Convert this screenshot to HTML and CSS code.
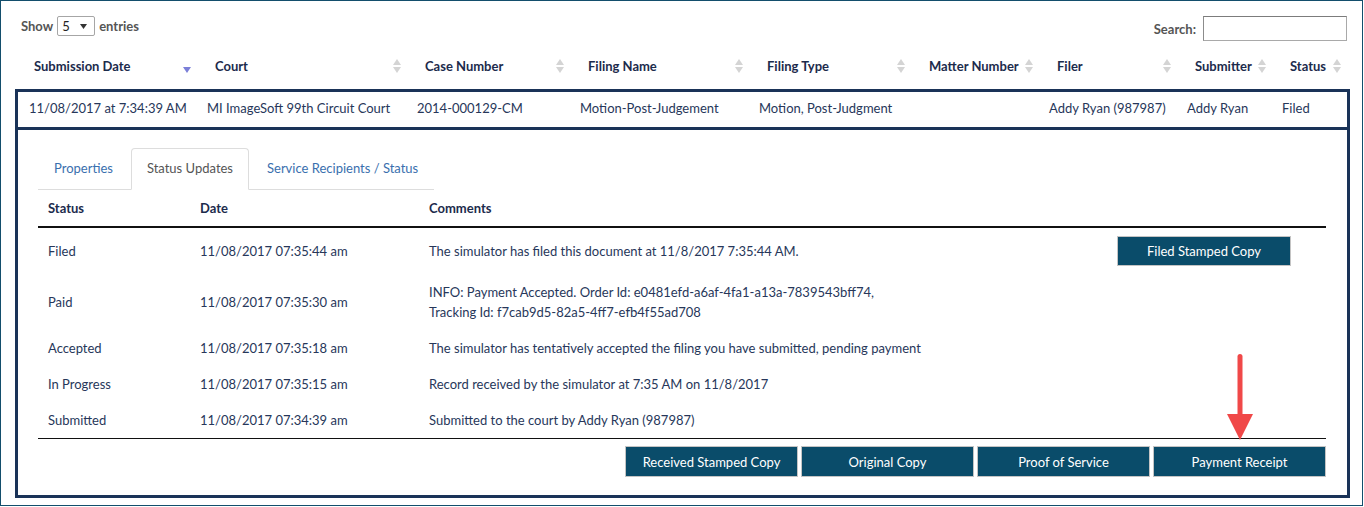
FILE: index.html
```html
<!DOCTYPE html>
<html lang="en">

<head>
    <meta charset="UTF-8">
    <title>Filings</title>
    <link rel="stylesheet" href="styles.css">
</head>

<body>
    <div class="frame">

        <div class="toolbar">
            <div class="length">
                Show
                <span class="select">5
                    <svg class="caret" width="7" height="5" viewBox="0 0 7 5"><polygon points="0,0 7,0 3.5,5" fill="#333" /></svg>
                </span>
                entries
            </div>
            <div class="search">
                Search:
                <input type="text">
            </div>
        </div>

        <div class="thead cols-head">
            <div class="th">Submission Date <svg class="sort desc" width="8" height="14" viewBox="0 0 8 14"><polygon points="0,8 8,8 4,14" /></svg></div>
            <div class="th">Court <svg class="sort" width="8" height="14" viewBox="0 0 8 14"><polygon points="4,0 8,6 0,6" /><polygon points="0,8 8,8 4,14" /></svg></div>
            <div class="th">Case Number <svg class="sort" width="8" height="14" viewBox="0 0 8 14"><polygon points="4,0 8,6 0,6" /><polygon points="0,8 8,8 4,14" /></svg></div>
            <div class="th">Filing Name <svg class="sort" width="8" height="14" viewBox="0 0 8 14"><polygon points="4,0 8,6 0,6" /><polygon points="0,8 8,8 4,14" /></svg></div>
            <div class="th">Filing Type <svg class="sort" width="8" height="14" viewBox="0 0 8 14"><polygon points="4,0 8,6 0,6" /><polygon points="0,8 8,8 4,14" /></svg></div>
            <div class="th">Matter Number <svg class="sort" width="8" height="14" viewBox="0 0 8 14"><polygon points="4,0 8,6 0,6" /><polygon points="0,8 8,8 4,14" /></svg></div>
            <div class="th">Filer <svg class="sort" width="8" height="14" viewBox="0 0 8 14"><polygon points="4,0 8,6 0,6" /><polygon points="0,8 8,8 4,14" /></svg></div>
            <div class="th">Submitter <svg class="sort" width="8" height="14" viewBox="0 0 8 14"><polygon points="4,0 8,6 0,6" /><polygon points="0,8 8,8 4,14" /></svg></div>
            <div class="th">Status <svg class="sort" width="8" height="14" viewBox="0 0 8 14"><polygon points="4,0 8,6 0,6" /><polygon points="0,8 8,8 4,14" /></svg></div>
        </div>

        <div class="record">
            <div class="row cols-row">
                <div class="td">11/08/2017 at 7:34:39 AM</div>
                <div class="td">MI ImageSoft 99th Circuit Court</div>
                <div class="td">2014-000129-CM</div>
                <div class="td">Motion-Post-Judgement</div>
                <div class="td">Motion, Post-Judgment</div>
                <div class="td"></div>
                <div class="td">Addy Ryan (987987)</div>
                <div class="td">Addy Ryan</div>
                <div class="td">Filed</div>
            </div>

            <div class="detail">
                <ul class="tabs">
                    <li><a href="#">Properties</a></li>
                    <li class="aktiv"><a href="#">Status Updates</a></li>
                    <li><a href="#">Service Recipients / Status</a></li>
                </ul>

                <div class="updates">
                    <div class="urow uhead">
                        <div class="cell">Status</div>
                        <div class="cell">Date</div>
                        <div class="cell">Comments</div>
                        <div class="cell"></div>
                    </div>
                    <div class="urow">
                        <div class="cell">Filed</div>
                        <div class="cell">11/08/2017 07:35:44 am</div>
                        <div class="cell">The simulator has filed this document at 11/8/2017 7:35:44 AM.</div>
                        <div class="cell knap-cell"><button class="knap">Filed Stamped Copy</button></div>
                    </div>
                    <div class="urow">
                        <div class="cell">Paid</div>
                        <div class="cell">11/08/2017 07:35:30 am</div>
                        <div class="cell">INFO: Payment Accepted. Order Id: e0481efd-a6af-4fa1-a13a-7839543bff74,<br>Tracking Id: f7cab9d5-82a5-4ff7-efb4f55ad708</div>
                        <div class="cell"></div>
                    </div>
                    <div class="urow">
                        <div class="cell">Accepted</div>
                        <div class="cell">11/08/2017 07:35:18 am</div>
                        <div class="cell">The simulator has tentatively accepted the filing you have submitted, pending payment</div>
                        <div class="cell"></div>
                    </div>
                    <div class="urow">
                        <div class="cell">In Progress</div>
                        <div class="cell">11/08/2017 07:35:15 am</div>
                        <div class="cell">Record received by the simulator at 7:35 AM on 11/8/2017</div>
                        <div class="cell"></div>
                    </div>
                    <div class="urow">
                        <div class="cell">Submitted</div>
                        <div class="cell">11/08/2017 07:34:39 am</div>
                        <div class="cell">Submitted to the court by Addy Ryan (987987)</div>
                        <div class="cell"></div>
                    </div>
                </div>

                <div class="actions">
                    <button class="knap">Received Stamped Copy</button>
                    <button class="knap">Original Copy</button>
                    <button class="knap">Proof of Service</button>
                    <button class="knap">Payment Receipt</button>
                </div>

                <!-- pil der peger paa kvitteringen -->
                <svg class="pil" width="30" height="92" viewBox="0 0 30 92">
                    <rect x="12.5" y="2" width="5" height="66" rx="2.5" fill="#f04848" />
                    <polygon points="2,62 28,62 15,88" fill="#f04848" />
                </svg>
            </div>
        </div>

    </div>
</body>

</html>
```

FILE: styles.css
```css
* {
    box-sizing: border-box;
    margin: 0;
    padding: 0;
}

body {
    background-color: #fff;
    font-family: Lato, "Open Sans", sans-serif;
    font-size: 13px;
    color: #27375a;
}

.frame {
    width: 1363px;
    height: 506px;
    border: 1px solid #134e6c;
    padding: 0 12px 0 14px;
}

.toolbar {
    display: flex;
    justify-content: space-between;
    align-items: flex-start;
    padding: 15px 3px 0 6px;
}

.length,
.search {
    display: flex;
    align-items: center;
    gap: 4px;
    font-weight: bold;
    color: #555;
    line-height: 20px;
}

.select {
    display: flex;
    align-items: center;
    justify-content: space-between;
    width: 38px;
    height: 20px;
    padding: 0 7px 0 4px;
    border: 1px solid #a6a6a6;
    border-radius: 2px;
    font-weight: normal;
    color: #222;
}

.search {
    gap: 7px;
}

.search input {
    width: 144px;
    height: 25px;
    border: 1px solid #a9a9a9;
    border-top-color: #7c7c7c;
    border-left-color: #8c8c8c;
}

.cols-head {
    display: grid;
    grid-template-columns: 182px 210px 163px 179px 162px 128px 138px 95px 78px;
}

.cols-row {
    display: grid;
    grid-template-columns: 179px 210px 163px 179px 162px 128px 138px 95px 75px;
}

.thead {
    margin-top: 5px;
    height: 40px;
}

.th {
    display: flex;
    align-items: center;
    justify-content: space-between;
    padding: 0 6px 0 18px;
    font-weight: bold;
    color: #1c2b4c;
    white-space: nowrap;
}

.th:first-child {
    padding-left: 19px;
}

.th:last-child {
    padding-right: 9px;
}

.sort {
    fill: #d4d4d4;
    flex-shrink: 0;
}

.sort.desc {
    fill: #7b7fd8;
}

.record {
    margin-top: 3px;
    width: 1335px;
    border: 3px solid #1a3358;
}

.row {
    height: 38px;
    align-items: center;
    border-bottom: 3px solid #1a3358;
    padding-bottom: 4px;
}

.td {
    padding-left: 10px;
    white-space: nowrap;
}

.td:first-child {
    padding-left: 11px;
}

.detail {
    position: relative;
    padding: 18px 21px 18px 20px;
}

.tabs {
    display: flex;
    width: fit-content;
    list-style: none;
    border-bottom: 1px solid #ddd;
}

.tabs li {
    margin-right: 2px;
    margin-bottom: -1px;
}

.tabs li:last-child {
    margin-right: 0;
}

.tabs a {
    display: block;
    padding: 9px 15px 11px;
    line-height: 20px;
    border: 1px solid transparent;
    border-radius: 4px 4px 0 0;
    color: #3a6fae;
    text-decoration: none;
}

.tabs .aktiv a {
    color: #555;
    background: #fff;
    border-color: #ddd;
    border-bottom-color: transparent;
}

.updates {
    border-bottom: 1px solid #111;
}

.urow {
    display: grid;
    grid-template-columns: 152px 229px 1fr 209px;
    align-items: center;
}

.uhead {
    font-weight: bold;
    color: #1c2b4c;
    border-bottom: 2px solid #111;
}

.cell {
    padding: 8px 10px;
    line-height: 20px;
}

.knap-cell {
    display: flex;
    padding: 8px 35px 8px 0;
}

.knap {
    width: 174px;
    height: 30px;
    background-color: #0a4c6a;
    border: 1px solid #c4c4c4;
    color: #fff;
    font-family: Lato, "Open Sans", sans-serif;
    font-size: 13px;
    cursor: pointer;
}

.actions {
    display: flex;
    justify-content: flex-end;
    gap: 3px;
    margin-top: 7px;
}

.actions .knap {
    width: 173px;
    height: 31px;
}

.pil {
    position: absolute;
    left: 1207px;
    top: 222px;
}
```
